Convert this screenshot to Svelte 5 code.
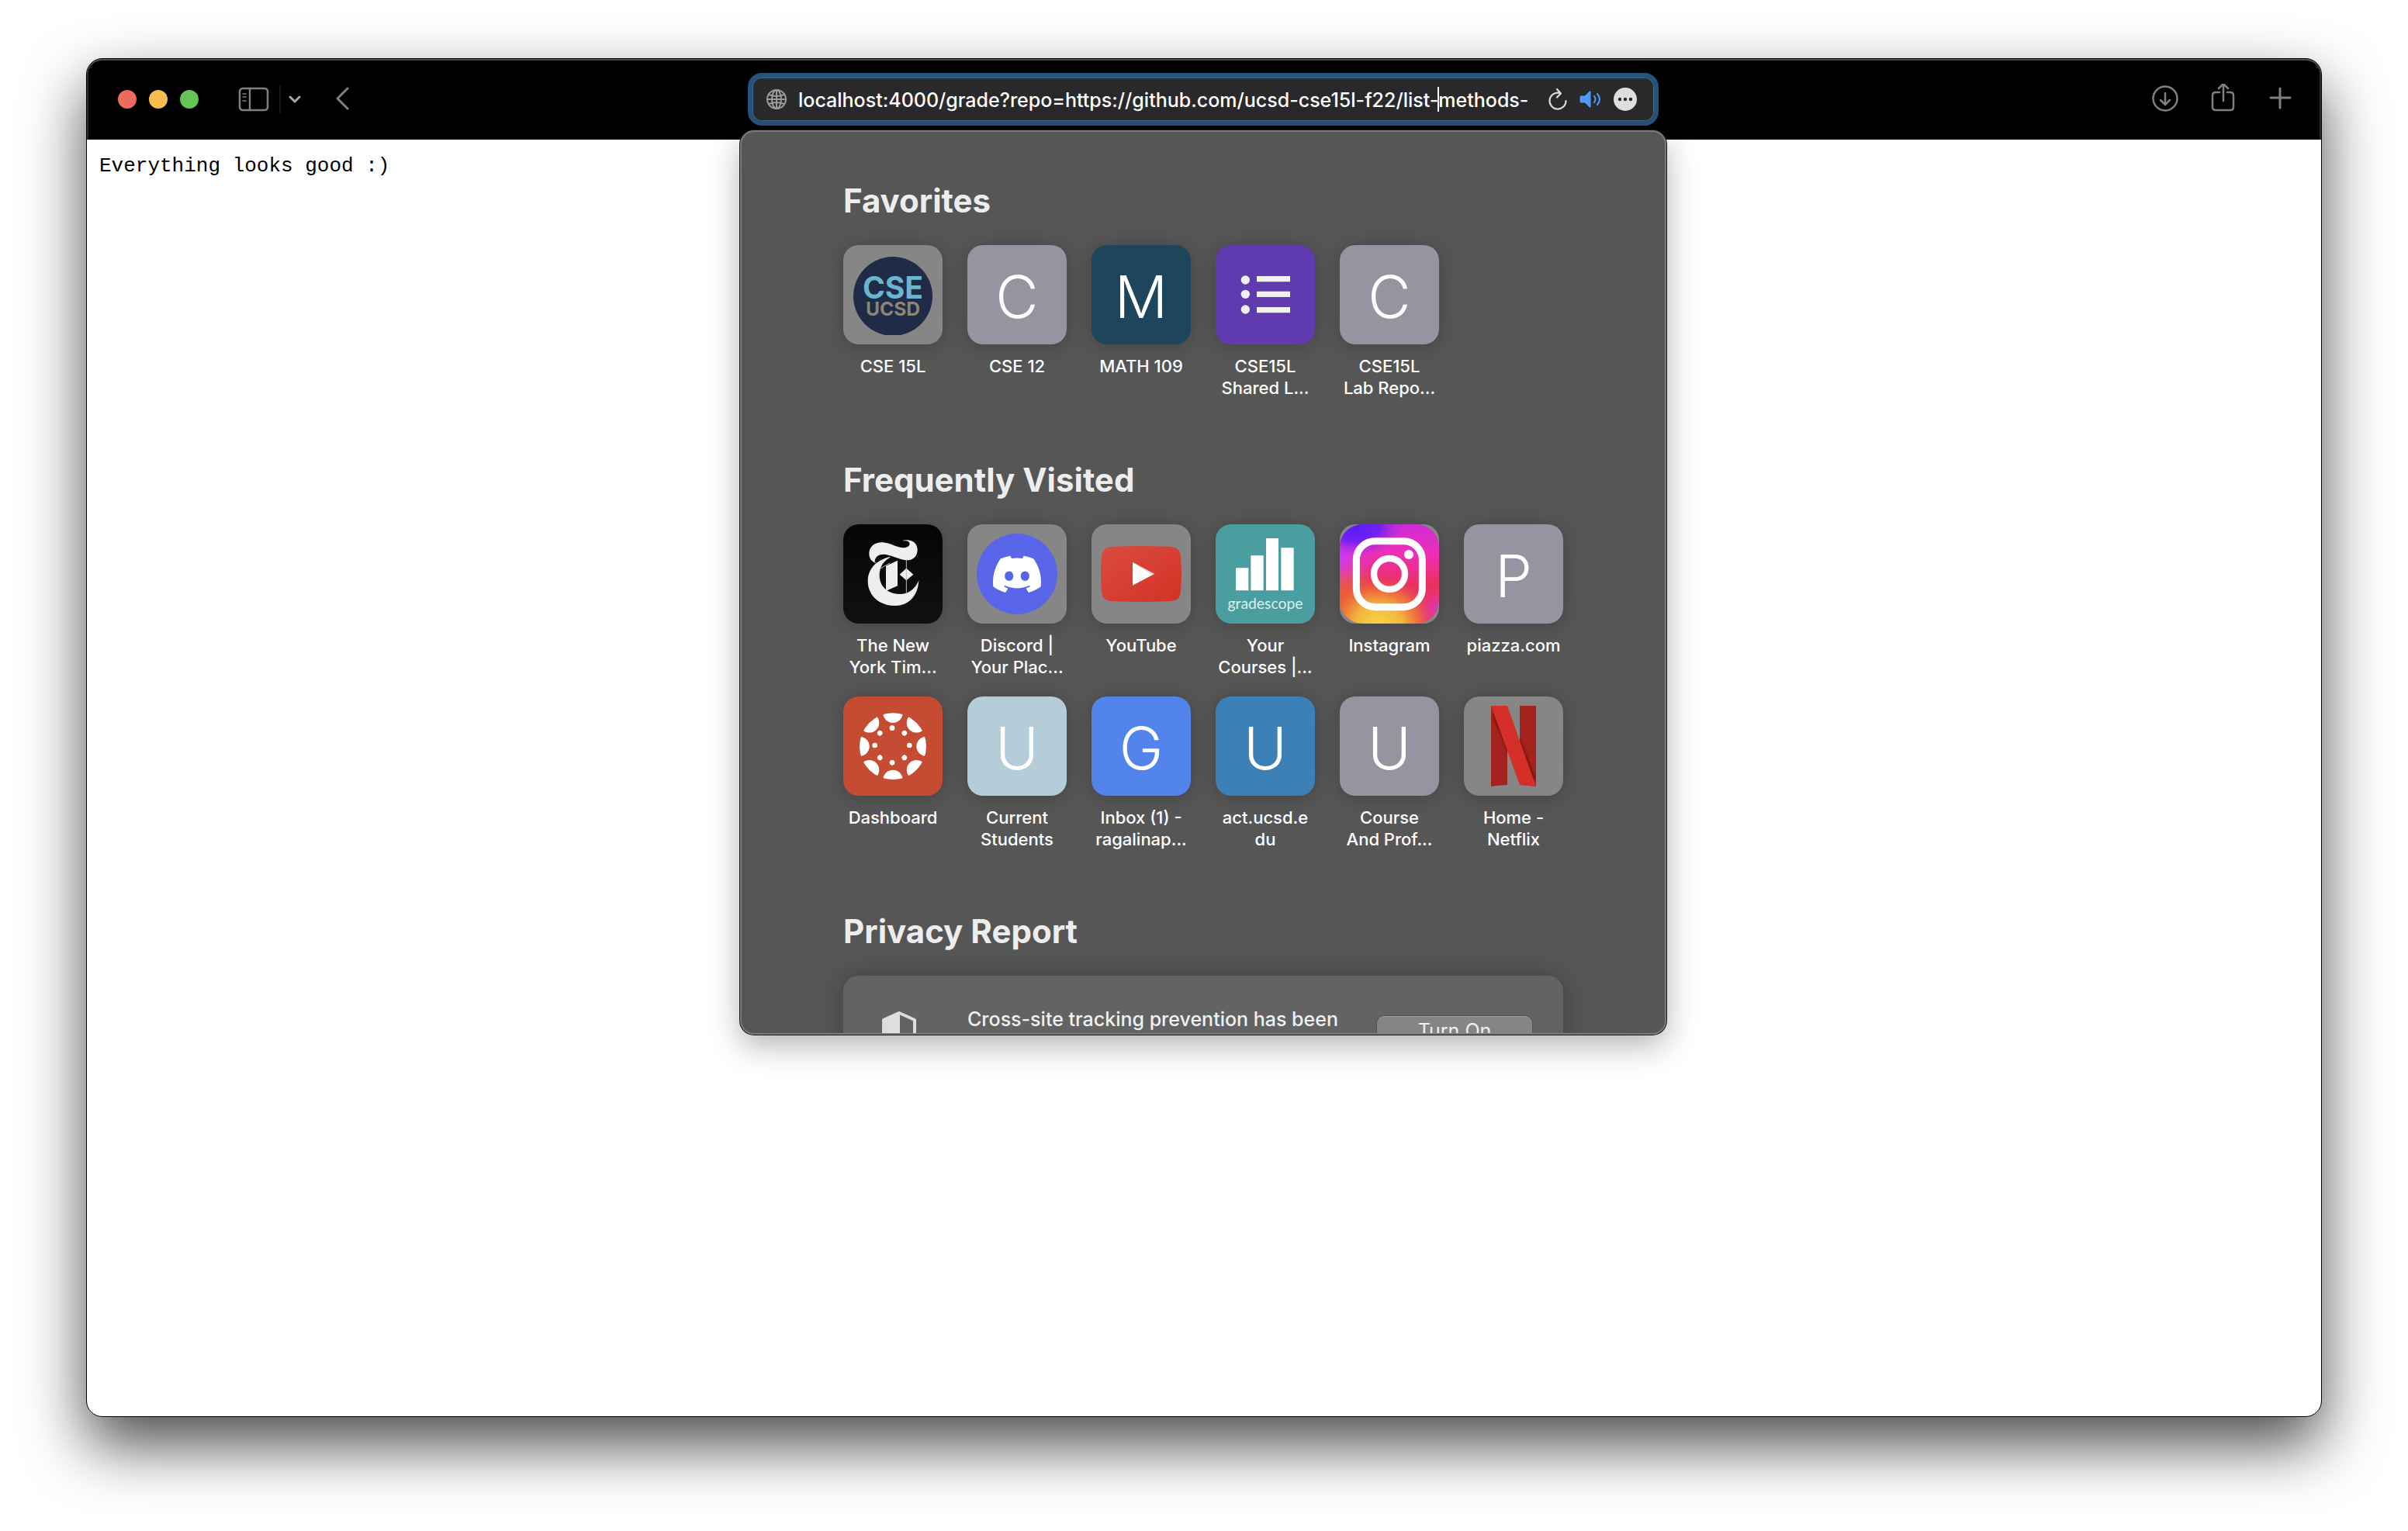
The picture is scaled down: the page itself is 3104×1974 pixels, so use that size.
<script>
  const favorites = [
    { lines: ['CSE 15L'], icon: 'cse', tone: 'plain' },
    { lines: ['CSE 12'], letter: 'C', tone: 'slate' },
    { lines: ['MATH 109'], letter: 'M', tone: 'navy' },
    { lines: ['CSE15L', 'Shared L...'], icon: 'forms', tone: 'purple' },
    { lines: ['CSE15L', 'Lab Repo...'], letter: 'C', tone: 'slate' }
  ];
  const frequent = [
    { lines: ['The New', 'York Tim...'], icon: 'times', tone: 'ink' },
    { lines: ['Discord |', 'Your Plac...'], icon: 'discord', tone: 'plain' },
    { lines: ['YouTube'], icon: 'youtube', tone: 'plain' },
    { lines: ['Your', 'Courses |...'], icon: 'gradescope', tone: 'teal' },
    { lines: ['Instagram'], icon: 'instagram', tone: 'plain' },
    { lines: ['piazza.com'], letter: 'P', tone: 'slate' },
    { lines: ['Dashboard'], icon: 'canvas', tone: 'brick' },
    { lines: ['Current', 'Students'], letter: 'U', tone: 'pale' },
    { lines: ['Inbox (1) -', 'ragalinap...'], letter: 'G', tone: 'blue' },
    { lines: ['act.ucsd.e', 'du'], letter: 'U', tone: 'azure' },
    { lines: ['Course', 'And Prof...'], letter: 'U', tone: 'slate' },
    { lines: ['Home -', 'Netflix'], icon: 'netflix', tone: 'plain' }
  ];
  const sections = [
    { title: 'Favorites', sites: favorites },
    { title: 'Frequently Visited', sites: frequent }
  ];
  const turns = [0, 45, 90, 135, 180, 225, 270, 315];
  let address = $state('localhost:4000/grade?repo=https://github.com/ucsd-cse15l-f22/list-methods-');
</script>

{#snippet art(name)}
  <svg class="art" viewBox="0 0 384 384" aria-hidden="true">
    {#if name === 'cse'}
      <clipPath id="cse-cut"><rect width="384" height="348" /></clipPath>
      <circle cx="192" cy="198" r="153" fill="#1f2b47" clip-path="url(#cse-cut)" />
      <text class="logo-bold" x="192" y="208" font-size="117" fill="#6cb5cf">CSE</text>
      <text class="logo-bold" x="192" y="274" font-size="74" fill="#8b8578">UCSD</text>
    {:else if name === 'forms'}
      <g fill="#f1f1f1">
        <circle cx="115" cy="135" r="17" /><circle cx="115" cy="190" r="17" /><circle cx="115" cy="249" r="17" />
        <path d="M159 120h129v22H159zM159 179h129v22H159zM159 240h129v22H159z" />
      </g>
    {:else if name === 'times'}
      <g transform="translate(-81 -258)" fill="#eeeeee">
        <path d="M312 320C345 313 368 330 368 356C368 382 350 398 326 397C300 396 262 374 236 374C216 374 202 386 203 404L210 409C192 404 180 390 181 368C183 342 205 327 232 328C262 329 292 350 316 349C332 348 342 338 336 328C331 321 322 321 312 322Z" />
        <path d="M262 384C210 395 176 430 176 478C176 535 222 573 280 573C335 573 370 535 373 474C362 505 335 528 300 528C255 528 221 500 221 455C221 425 235 400 262 386Z" />
        <path d="M246 419L291 398V496L246 516ZM325 428L352 452L325 475L299 452Z" />
        <path d="M325 396V522M224 429L262 408" stroke="#bdbdbd" stroke-width="3" fill="none" />
      </g>
    {:else if name === 'discord'}
      <circle cx="192" cy="192" r="156" fill="#5a66e9" />
      <path transform="translate(99 100) scale(7.75)" fill="#fff" d="M20.317 4.3698a19.7913 19.7913 0 00-4.8851-1.5152.0741.0741 0 00-.0785.0371c-.211.3753-.4447.8648-.6083 1.2495-1.8447-.2762-3.68-.2762-5.4868 0-.1636-.3933-.4058-.8742-.6177-1.2495a.077.077 0 00-.0785-.037 19.7363 19.7363 0 00-4.8852 1.515.0699.0699 0 00-.0321.0277C.5334 9.0458-.319 13.5799.0992 18.0578a.0824.0824 0 00.0312.0561c2.0528 1.5076 4.0413 2.4228 5.9929 3.0294a.0777.0777 0 00.0842-.0276c.4616-.6304.8731-1.2952 1.226-1.9942a.076.076 0 00-.0416-.1057c-.6528-.2476-1.2743-.5495-1.8722-.8923a.077.077 0 01-.0076-.1277c.1258-.0943.2517-.1923.3718-.2914a.0743.0743 0 01.0776-.0105c3.9278 1.7933 8.18 1.7933 12.0614 0a.0739.0739 0 01.0785.0095c.1202.099.246.1981.3728.2924a.077.077 0 01-.0066.1276 12.2986 12.2986 0 01-1.873.8914.0766.0766 0 00-.0407.1067c.3604.698.7719 1.3628 1.225 1.9932a.076.076 0 00.0842.0286c1.961-.6067 3.9495-1.5219 6.0023-3.0294a.077.077 0 00.0313-.0552c.5004-5.177-.8382-9.6739-3.5485-13.6604a.061.061 0 00-.0312-.0286zM8.02 15.3312c-1.1825 0-2.1569-1.0857-2.1569-2.419 0-1.3332.9555-2.4189 2.157-2.4189 1.2108 0 2.1757 1.0952 2.1568 2.419 0 1.3332-.9555 2.4189-2.1569 2.4189zm7.9748 0c-1.1825 0-2.1569-1.0857-2.1569-2.419 0-1.3332.9554-2.4189 2.1569-2.4189 1.2108 0 2.1757 1.0952 2.1568 2.419 0 1.3332-.946 2.4189-2.1568 2.4189Z" />
    {:else if name === 'youtube'}
      <linearGradient id="yt" x1="0" y1="0" x2="1" y2="1"><stop stop-color="#db4b40" /><stop offset="1" stop-color="#d13324" /></linearGradient>
      <path fill="url(#yt)" d="M84 86Q192 82 300 86C332 88 343 98 345 126Q351 192 345 258C343 286 332 296 300 298Q192 302 84 298C52 296 41 286 39 258Q33 192 39 126C41 98 52 88 84 86Z" />
      <path fill="#fbfbfb" d="M159 147L243 192L159 236Z" />
      <path fill="#d2d3d6" d="M159 147L243 192L236 196Z" />
    {:else if name === 'gradescope'}
      <path fill="#fff" d="M78 169h49v87H78zM136 121h49v135h-49zM195 54h48v202h-48zM253 91h49v165h-49z" />
      <text class="logo-light" x="192" y="327" font-size="58" fill="#dcefee">gradescope</text>
    {:else if name === 'instagram'}
      <defs>
        <linearGradient id="ig-base" x1="0" y1="0" x2="0" y2="1"><stop stop-color="#cf2bd6" /><stop offset=".3" stop-color="#ee2fb4" /><stop offset=".6" stop-color="#ea2f62" /><stop offset="1" stop-color="#e83a6a" /></linearGradient>
        <radialGradient id="ig-yellow"><stop stop-color="#f7d643" /><stop offset=".4" stop-color="#f4b43c" /><stop offset=".7" stop-color="#ee7038" stop-opacity=".8" /><stop offset="1" stop-color="#ea3a55" stop-opacity="0" /></radialGradient>
        <radialGradient id="ig-orange"><stop stop-color="#ee5f2a" /><stop offset=".5" stop-color="#ee5f2a" stop-opacity=".8" /><stop offset="1" stop-color="#ee5040" stop-opacity="0" /></radialGradient>
        <radialGradient id="ig-violet"><stop stop-color="#cb3bfa" /><stop offset="1" stop-color="#e036d8" stop-opacity="0" /></radialGradient>
        <radialGradient id="ig-blue"><stop stop-color="#561cf7" /><stop offset=".5" stop-color="#6a1ff5" stop-opacity=".9" /><stop offset="1" stop-color="#b02be8" stop-opacity="0" /></radialGradient>
      </defs>
      <clipPath id="ig-cut"><rect width="384" height="384" rx="88" /></clipPath>
      <g clip-path="url(#ig-cut)">
        <rect width="384" height="384" fill="url(#ig-base)" />
        <circle cx="0" cy="270" r="150" fill="url(#ig-orange)" />
        <ellipse cx="150" cy="384" rx="230" ry="190" fill="url(#ig-yellow)" />
        <circle cx="0" cy="130" r="130" fill="url(#ig-violet)" />
        <ellipse cx="60" cy="10" rx="190" ry="115" fill="url(#ig-blue)" />
        <circle cx="384" cy="330" r="80" fill="url(#ig-violet)" opacity=".6" />
      </g>
      <g fill="none" stroke="#fff">
        <rect x="64" y="65" width="255" height="255" rx="72" stroke-width="27" />
        <circle cx="192" cy="192" r="60" stroke-width="25" />
      </g>
      <circle cx="267" cy="117" r="18" fill="#fff" />
    {:else if name === 'canvas'}
      <clipPath id="canvas-cut"><circle cx="192" cy="193" r="129" /></clipPath>
      <g fill="#fff" clip-path="url(#canvas-cut)">
        {#each turns as turn}
          <circle cx="192" cy="64" r="38" transform="rotate({turn} 192 193)" />
          <circle cx="189" cy="122" r="10" transform="rotate({turn} 189 189)" />
        {/each}
      </g>
    {:else if name === 'netflix'}
      <clipPath id="nf-cut"><path d="M105 36h63v306q-32 1-63 6zM216 36h63v312q-31-5-63-6z" /></clipPath>
      <filter id="nf-soft"><feGaussianBlur stdDeviation="7" /></filter>
      <g clip-path="url(#nf-cut)">
        <rect x="100" y="30" width="190" height="325" fill="#a4231e" />
        <path d="M115 70L168 50L275 320L216 325Z" fill="#5f110e" filter="url(#nf-soft)" />
      </g>
      <path fill="#d42f29" d="M105 36h63L279 348Q248 343 216 342Z" />
    {/if}
  </svg>
{/snippet}

<div class="desktop">
  <div class="window">
    <header class="toolbar">
      <div class="group left">
        <div class="lights">
          <button class="light close" aria-label="Close"></button>
          <button class="light minimize" aria-label="Minimize"></button>
          <button class="light zoom" aria-label="Zoom"></button>
        </div>
        <button class="tool" aria-label="Show sidebar">
          <svg width="40" height="32" viewBox="0 0 40 32" fill="none" stroke="#7f7f7f" stroke-width="2" stroke-linecap="round"><rect x="2" y="2" width="36" height="28" rx="4" stroke-width="2.6" /><path d="M15 2v28" stroke-width="2.4" /><path d="M6 9h4M6 13h4M6 18h4" stroke-width="1.6" /></svg>
        </button>
        <span class="rule"></span>
        <button class="tool" aria-label="Tab groups">
          <svg width="16" height="16" viewBox="0 0 16 16" fill="none" stroke="#a6a6a6" stroke-width="3" stroke-linecap="round" stroke-linejoin="round"><path d="M2 5l6 6 6-6" /></svg>
        </button>
        <button class="tool back" aria-label="Back">
          <svg width="18" height="32" viewBox="0 0 18 32" fill="none" stroke="#808080" stroke-width="3" stroke-linecap="round" stroke-linejoin="round"><path d="M16 2L3 15l13 13" /></svg>
        </button>
      </div>

      <div class="address">
        <div class="field">
          <svg width="28" height="28" viewBox="0 0 28 28" fill="none" stroke="#9b9b9c" stroke-width="2" aria-hidden="true"><circle cx="14" cy="14" r="12" /><ellipse cx="14" cy="14" rx="6" ry="12" /><path d="M14 2v24M2 14h24M4 8q10 4 20 0M4 20q10-4 20 0" /></svg>
          <div class="entry">
            <input type="text" aria-label="Address" spellcheck="false" bind:value={address} />
            <span class="caret"></span>
          </div>
          <button class="tool" aria-label="Reload">
            <svg width="26" height="30" viewBox="0 0 26 30" fill="none" stroke="#dcdcdc" stroke-width="2.2" stroke-linecap="round" stroke-linejoin="round"><path d="M16 7A10.500 10.500 0 1 0 23.500 17M12 2l5 5.500-5 5" /></svg>
          </button>
          <button class="tool" aria-label="Mute tab">
            <svg width="30" height="26" viewBox="0 0 30 26" fill="none" stroke="#4d9bf8" stroke-width="2" stroke-linecap="round"><path d="M3 9h5l6-6q1-1 1 0v20q0 1-1 0l-6-6H3q-1 0-1-1v-6q0-1 1-1z" fill="#4d9bf8" stroke-width="1" /><path d="M20 9q3 4 0 8M24 6q6 7 0 14" /></svg>
          </button>
          <button class="tool" aria-label="Page options">
            <svg width="32" height="32" viewBox="0 0 32 32"><circle cx="16" cy="16" r="15" fill="#dedede" /><g fill="#29292b"><circle cx="9" cy="16" r="2.200" /><circle cx="16" cy="16" r="2.200" /><circle cx="23" cy="16" r="2.200" /></g></svg>
          </button>
        </div>

        <div class="popover">
          {#each sections as section}
            <section>
              <h2>{section.title}</h2>
              <ul class="sites">
                {#each section.sites as site}
                  <li>
                    <a href="#site">
                      <span class="tile {site.tone}">
                        {#if site.letter}<span class="letter">{site.letter}</span>{:else}{@render art(site.icon)}{/if}
                      </span>
                      <span class="label">{#each site.lines as line}<span>{line}</span>{/each}</span>
                    </a>
                  </li>
                {/each}
              </ul>
            </section>
          {/each}
          <section>
            <h2>Privacy Report</h2>
            <div class="card">
              <svg width="46" height="56" viewBox="0 0 46 56" aria-hidden="true"><path d="M23 2L43 11V32Q43 46 23 54Q3 46 3 32V11Z" fill="none" stroke="#dedede" stroke-width="4" stroke-linejoin="round" /><path d="M24 2L3 11V32Q3 46 24 54Z" fill="#dedede" /></svg>
              <p>Cross-site tracking prevention has been</p>
              <button class="turn-on">Turn On</button>
            </div>
          </section>
        </div>
      </div>

      <div class="group right">
        <button class="tool" aria-label="Downloads">
          <svg width="34" height="40" viewBox="0 0 34 40" fill="none" stroke="#7f7f7f" stroke-width="2.500" stroke-linecap="round" stroke-linejoin="round"><circle cx="17" cy="19" r="15.500" /><path d="M17 12v14M11 21l6 6 6-6" /></svg>
        </button>
        <button class="tool" aria-label="Share">
          <svg width="34" height="40" viewBox="0 0 34 40" fill="none" stroke="#7f7f7f" stroke-width="2.500" stroke-linecap="round" stroke-linejoin="round"><path d="M13 11H8q-4 0-4 4v15q0 4 4 4h19q4 0 4-4V15q0-4-4-4h-4M18 22V1M12 6l6-6 6 6" /></svg>
        </button>
        <button class="tool" aria-label="New tab">
          <svg width="34" height="40" viewBox="0 0 34 40" fill="none" stroke="#7f7f7f" stroke-width="3" stroke-linecap="round"><path d="M17 6v25M5 18h25" /></svg>
        </button>
      </div>
    </header>
    <main><pre>Everything looks good :)</pre></main>
  </div>
</div>

<style>
  :global(body) { background: #fff; }
  .desktop {
    box-sizing: border-box;
    min-height: 100vh;
    padding: 75px 111px 147px;
    display: flex;
    font-family: Inter, 'Liberation Sans', sans-serif;
  }
  .window {
    flex: 1;
    min-width: 0;
    display: flex;
    flex-direction: column;
    border: 1px solid #000;
    border-radius: 21px;
    background: #fff;
    box-shadow: 0 36px 80px rgba(0, 0, 0, 0.7);
  }
  .toolbar {
    box-sizing: border-box;
    height: 104px;
    padding: 0 36px 0 34px;
    display: grid;
    grid-template-columns: 1fr minmax(0, 1174px) 1fr;
    align-items: center;
    background: #000;
    border-radius: 20px 20px 0 0;
    box-shadow: inset 0 2px 0 #4c4c4c, inset 2px 0 0 #2c2c2c, inset -2px 0 0 #2c2c2c;
  }
  button { padding: 0; border: 0; background: none; font: inherit; color: inherit; }
  .tool { display: flex; flex: none; }
  svg { display: block; flex: none; }
  .group { display: flex; align-items: center; }
  .left { padding-left: 6px; }
  .right { justify-content: flex-end; gap: 40px; }
  .lights { display: flex; gap: 16px; margin-right: 51px; }
  .light { width: 24px; height: 24px; border-radius: 50%; }
  .close { background: #ed6a5f; }
  .minimize { background: #f5be4f; }
  .zoom { background: #62c555; }
  .rule { width: 2px; height: 36px; margin: 0 10px 0 13px; background: #161616; }
  .back { margin-left: 44px; }

  .address { position: relative; }
  .field {
    box-sizing: border-box;
    height: 68px;
    padding: 0 21px 0 17px;
    display: flex;
    align-items: center;
    gap: 14px;
    border: 6px solid #27527c;
    border-radius: 18px;
    background: #29292b;
    box-shadow: inset 0 0 0 1px #3c6a99;
  }
  .entry { position: relative; flex: 1; min-width: 0; display: flex; }
  input {
    width: 100%;
    padding: 2px 0 0;
    border: 0;
    outline: 0;
    background: none;
    color: #fff;
    font: 500 25px/34px Inter, 'Liberation Sans', sans-serif;
  }
  .caret { position: absolute; top: 2px; left: 824px; width: 2px; height: 32px; background: #fff; }

  .popover {
    position: absolute;
    top: calc(100% + 6px);
    left: -10px;
    right: -10px;
    box-sizing: border-box;
    max-height: 1166px;
    padding: 62px 131px 80px;
    overflow: hidden;
    display: flex;
    flex-direction: column;
    gap: 78px;
    border: 2px solid #7b7b7b;
    border-radius: 18px;
    background: #565656;
    box-shadow: 0 0 0 1px #161616, 0 14px 40px rgba(0, 0, 0, 0.3);
  }
  section { flex: none; }
  h2 { margin: 0 0 30px; color: #ededed; font-size: 42px; line-height: 54px; font-weight: 700; }
  .sites {
    margin: 0;
    padding: 0;
    list-style: none;
    display: grid;
    grid-template-columns: repeat(auto-fill, 128px);
    gap: 24px 32px;
  }
  .sites a { display: flex; flex-direction: column; gap: 14px; color: #fff; text-decoration: none; }
  .tile {
    height: 128px;
    display: flex;
    align-items: center;
    justify-content: center;
    overflow: hidden;
    border-radius: 20px;
    box-shadow: 0 2px 24px rgba(0, 0, 0, 0.22);
  }
  .art { width: 128px; height: 128px; }
  .letter { padding-top: 4px; font-size: 76px; line-height: 84px; font-weight: 300; }
  .logo-bold { font-family: Inter, sans-serif; font-weight: 700; text-anchor: middle; }
  .logo-light { font-family: Lato, sans-serif; font-weight: 400; text-anchor: middle; }
  .label {
    min-height: 56px;
    display: flex;
    flex-direction: column;
    align-items: center;
    font-size: 22px;
    line-height: 28px;
    font-weight: 500;
    white-space: nowrap;
  }
  .plain { background: #868686; }
  .slate { background: #9595a1; }
  .navy { background: #1d465c; }
  .purple { background: #603bb0; }
  .ink { background: linear-gradient(#050505, #111); }
  .teal { background: #4b9ea0; }
  .brick { background: #c54b32; }
  .pale { background: #b4cdd8; }
  .blue { background: #5284ec; }
  .azure { background: #3c80b8; }

  .card {
    box-sizing: border-box;
    min-height: 160px;
    padding: 40px 40px 40px 49px;
    display: flex;
    align-items: flex-start;
    border-radius: 20px;
    background: #636363;
    box-shadow: 0 0 30px rgba(0, 0, 0, 0.25);
  }
  .card svg { margin-top: 6px; }
  .card p { flex: 1; margin: 0 0 0 65px; color: #f0f0f0; font-size: 25px; line-height: 32px; font-weight: 500; }
  .turn-on {
    width: 200px;
    height: 38px;
    margin-top: 12px;
    border-radius: 10px;
    background: #858585;
    box-shadow: inset 0 1px 0 #9a9a9a, 0 0 2px rgba(0, 0, 0, 0.5);
    color: #f0f0f0;
    font-size: 25px;
    line-height: 38px;
  }
  main { flex: 1; padding: 18px 16px; }
  pre { margin: 0; color: #000; font: 26px/32px 'Liberation Mono', monospace; }
</style>
